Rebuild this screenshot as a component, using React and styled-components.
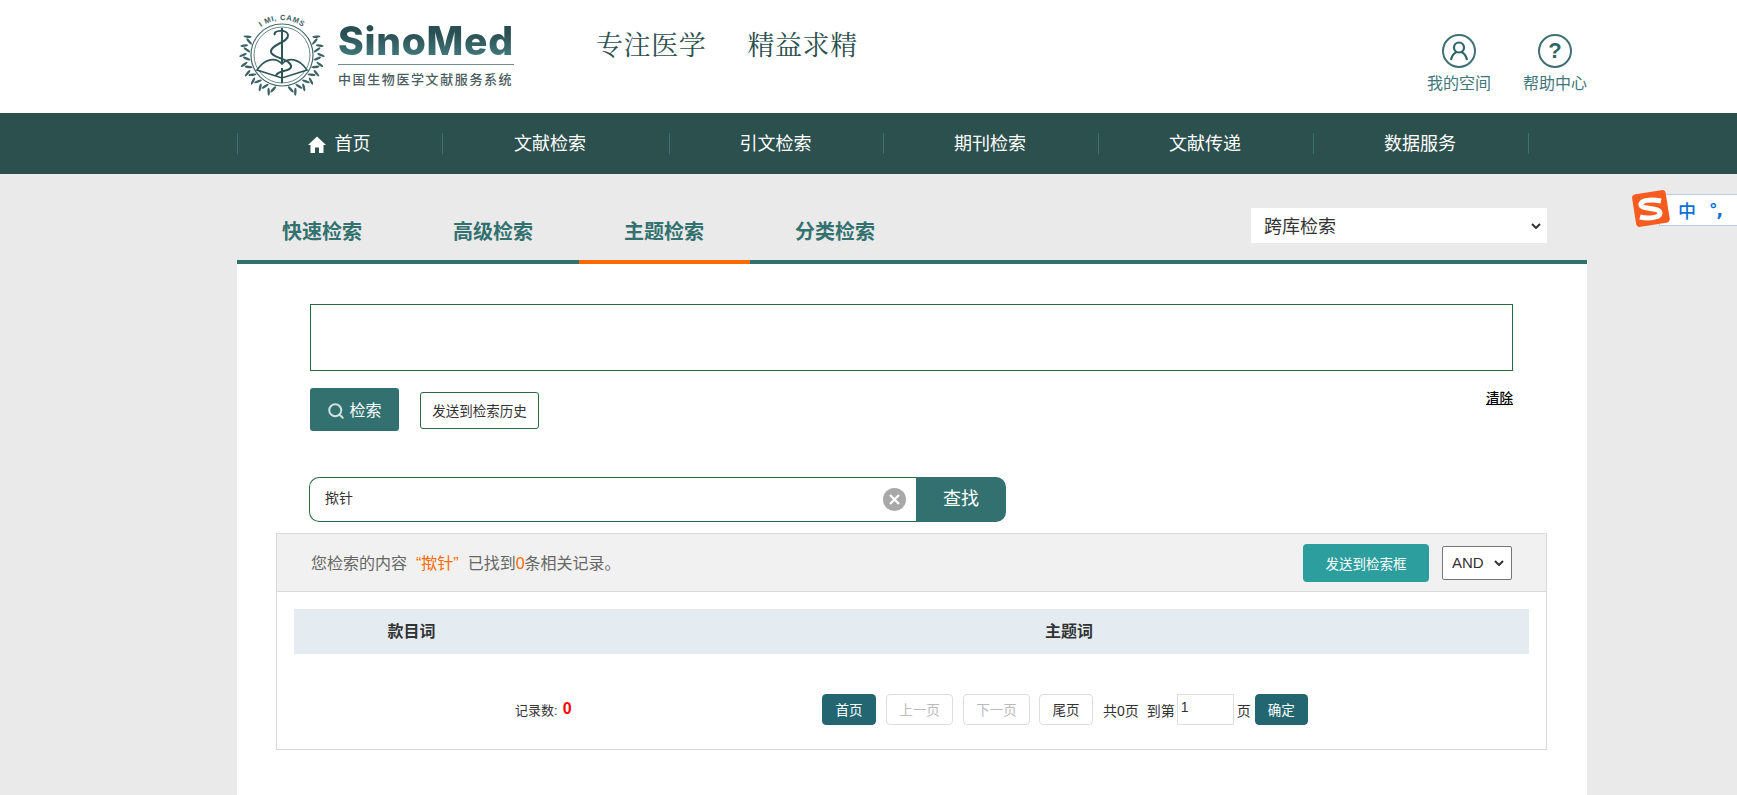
import React from "react";
import styled, { createGlobalStyle } from "styled-components";
import { Search } from "lucide-react";

const CHEVRON = `url("data:image/svg+xml,%3Csvg xmlns='http://www.w3.org/2000/svg' width='10' height='6' viewBox='0 0 10 6'%3E%3Cpath d='M1 1l4 4 4-4' fill='none' stroke='%23333' stroke-width='2'/%3E%3C/svg%3E")`;

const GlobalStyle = createGlobalStyle`
  html, body {
    margin: 0;
    padding: 0;
    height: 100%;
    background: #eaeaea;
    font-family: "Liberation Sans", "Noto Sans CJK SC", sans-serif;
    color: #333;
  }
  #root {
    min-height: 100%;
  }
  * {
    box-sizing: border-box;
  }
`;

const Page = styled.div`
  position: relative;
  display: flex;
  flex-direction: column;
  min-height: 100vh;
  overflow: hidden;
`;

const Header = styled.header`
  display: flex;
  align-items: flex-start;
  height: 113px;
  padding-left: 238px;
  background: #fff;
`;

const LogoMark = styled.svg`
  flex: none;
  width: 88px;
  height: 90px;
  margin-top: 8px;
`;

const Brand = styled.div`
  display: flex;
  flex-direction: column;
  width: 176px;
  margin: 0 0 0 12px;
`;

const BrandName = styled.div`
  height: 38px;
  margin-top: 22px;
  font: 800 39px/38px Inter, "Liberation Sans", sans-serif;
  letter-spacing: 0.7px;
  white-space: nowrap;
  background: linear-gradient(180deg, #2a4f52 30%, #41787c 90%);
  -webkit-background-clip: text;
  background-clip: text;
  color: transparent;
`;

const BrandRule = styled.div`
  height: 1px;
  margin-top: 4px;
  background: #6f8f92;
`;

const BrandSub = styled.div`
  margin-top: 6px;
  font-size: 13px;
  line-height: 18px;
  font-weight: 500;
  letter-spacing: 1.6px;
  white-space: nowrap;
  color: #4b5d5f;
`;

const Slogan = styled.div`
  display: flex;
  gap: 41px;
  margin: 26px 0 0 82px;
  font-family: "Noto Serif CJK SC", "Liberation Serif", serif;
  font-size: 27px;
  line-height: 36px;
  letter-spacing: 0.6px;
  color: #2c5050;
`;

const UserLinks = styled.div`
  display: flex;
  gap: 32px;
  margin: 34px 0 0 auto;
  padding-right: 150px;
`;

const UserLink = styled.a`
  display: flex;
  flex-direction: column;
  align-items: center;
  gap: 4px;
  font-size: 16px;
  line-height: 24px;
  color: #41767a;
`;

const RoundIcon = styled.span`
  display: flex;
  align-items: center;
  justify-content: center;
  width: 34px;
  height: 34px;
  border: 2px solid #3f7074;
  border-radius: 50%;
  font: 700 22px/1 "Liberation Sans", sans-serif;
  color: #2f6468;
`;

const Nav = styled.nav`
  display: flex;
  align-items: center;
  height: 61px;
  padding-left: 237px;
  background: #2c504e;
`;

const NavItem = styled.a`
  display: flex;
  align-items: center;
  justify-content: center;
  gap: 9px;
  flex: none;
  width: ${(p) => p.$w}px;
  height: 21px;
  padding: 2px ${(p) => p.$pr || 2}px 0 0;
  border-left: 1px solid #3c7072;
  border-right: ${(p) => (p.$last ? "1px solid #3c7072" : "none")};
  font-size: 18px;
  line-height: 19px;
  color: #fff;
`;

const Main = styled.main`
  display: flex;
  flex: 1;
  flex-direction: column;
  width: 1350px;
  margin-left: 237px;
`;

const TabBar = styled.div`
  display: flex;
  align-items: flex-end;
  height: 90px;
  border-bottom: 4px solid #33716f;
`;

const Tab = styled.a`
  flex: none;
  width: 171px;
  height: 62px;
  margin-bottom: -4px;
  padding-right: 1px;
  border-bottom: 4px solid ${(p) => (p.$active ? "#ff6a00" : "transparent")};
  font-size: 20px;
  font-weight: 700;
  line-height: 60px;
  text-align: center;
  color: #33716f;
`;

const DbSelect = styled.select`
  width: 296px;
  height: 35px;
  margin: 0 40px 17px auto;
  padding: 3px 0 0 13px;
  border: none;
  border-radius: 0;
  outline: none;
  appearance: none;
  background: #fff ${CHEVRON} no-repeat right 6px center;
  font: 18px "Liberation Sans", "Noto Sans CJK SC", sans-serif;
  color: #333;
`;

const Card = styled.section`
  flex: 1;
  padding-top: 40px;
  background: #fff;
`;

const Form = styled.div`
  margin: 0 74px 0 73px;
`;

const QueryBox = styled.textarea`
  display: block;
  width: 100%;
  height: 67px;
  border: 1px solid #266b3f;
  outline: none;
  resize: none;
`;

const Actions = styled.div`
  display: flex;
  align-items: center;
  gap: 21px;
  height: 43px;
  margin-top: 17px;
`;

const SearchButton = styled.button`
  display: flex;
  align-items: center;
  justify-content: center;
  gap: 4px;
  width: 89px;
  height: 43px;
  padding: 0 0 2px;
  border: none;
  border-radius: 3px;
  background: #337171;
  font: 16px "Liberation Sans", "Noto Sans CJK SC", sans-serif;
  color: #fff;
  svg {
    margin-top: 4px;
    color: #cfe2e0;
  }
`;

const HistoryButton = styled.button`
  width: 119px;
  height: 37px;
  margin-top: 1px;
  padding: 0;
  border: 1px solid #266b3f;
  border-radius: 3px;
  background: #fff;
  font: 13.5px "Liberation Sans", "Noto Sans CJK SC", sans-serif;
  color: #333;
`;

const ClearLink = styled.a`
  align-self: flex-start;
  margin: 2px 0 0 auto;
  font-size: 13.5px;
  font-weight: 500;
  line-height: 18px;
  text-decoration: underline;
  color: #000;
`;

const FindBar = styled.div`
  display: flex;
  width: 697px;
  height: 45px;
  margin: 46px 0 0 -1px;
`;

const FindField = styled.div`
  display: flex;
  flex: 1;
  align-items: center;
  padding: 0 10px 0 15px;
  border: 1px solid #266b3f;
  border-right: none;
  border-radius: 10px 0 0 10px;
`;

const FindInput = styled.input`
  flex: 1;
  min-width: 0;
  border: none;
  outline: none;
  padding: 0 0 6px;
  font: 14px "Liberation Sans", "Noto Sans CJK SC", sans-serif;
  color: #333;
`;

const FindButton = styled.button`
  flex: none;
  width: 90px;
  padding: 0 0 6px;
  border: none;
  border-radius: 0 10px 10px 0;
  background: #337171;
  font: 18px "Liberation Sans", "Noto Sans CJK SC", sans-serif;
  color: #fff;
`;

const ResultPanel = styled.div`
  height: 217px;
  margin: 11px 40px 0 39px;
  border: 1px solid #d9d9d9;
`;

const ResultHead = styled.div`
  display: flex;
  align-items: center;
  height: 58px;
  padding: 0 34px;
  border-bottom: 1px solid #d9d9d9;
  background: #f1f1f1;
`;

const ResultText = styled.div`
  padding-top: 2px;
  font-size: 16px;
  line-height: 24px;
  color: #666;
`;

const Hit = styled.span`
  color: #ff6a00;
`;

const QuotedHit = styled(Hit)`
  margin: 0 9px 0 9px;
`;

const SendButton = styled.button`
  width: 126px;
  height: 38px;
  margin-left: auto;
  padding: 0;
  border: none;
  border-radius: 4px;
  background: #2c9e9e;
  font: 13.5px "Liberation Sans", "Noto Sans CJK SC", sans-serif;
  color: #fff;
`;

const OperatorSelect = styled.select`
  width: 70px;
  height: 34px;
  margin-left: 13px;
  padding-left: 9px;
  border: 1px solid #767676;
  border-radius: 2px;
  appearance: none;
  background: #fff ${CHEVRON} no-repeat right 7px center;
  font: 15px "Liberation Sans", sans-serif;
  color: #333;
`;

const TableHead = styled.div`
  display: grid;
  grid-template-columns: 235px 1fr;
  height: 45px;
  margin: 17px 17px 0 17px;
  background: #e4ecf2;
  font-size: 16px;
  font-weight: 700;
  line-height: 45px;
  text-align: center;
  color: #333;
`;

const SubjectHead = styled.div`
  padding-left: 80px;
`;

const Pager = styled.div`
  display: flex;
  align-items: center;
  height: 31px;
  margin-top: 40px;
  padding-left: 238px;
  font-size: 14px;
  color: #333;
`;

const RecordCount = styled.div`
  display: flex;
  align-items: center;
  gap: 5px;
  flex: none;
  width: 307px;
  font-size: 13px;
`;

const CountNumber = styled.b`
  margin-top: -2px;
  font-size: 16px;
  line-height: 1;
  color: #f00;
`;

const PageButton = styled.button`
  flex: none;
  width: ${(p) => p.$w}px;
  height: 31px;
  margin-right: ${(p) => p.$mr || 0}px;
  padding: 0 0 2px;
  border: 1px solid ${(p) => (p.$primary ? "#236672" : "#ddd")};
  border-radius: 4px;
  background: ${(p) => (p.$primary ? "#236672" : "#fff")};
  font: 13.5px "Liberation Sans", "Noto Sans CJK SC", sans-serif;
  color: ${(p) => (p.$primary ? "#fff" : p.disabled ? "#bbb" : "#333")};
`;

const PagerText = styled.span`
  flex: none;
  margin-right: ${(p) => p.$mr || 0}px;
  white-space: nowrap;
`;

const PageInput = styled.input`
  flex: none;
  width: 57px;
  height: 31px;
  margin-right: 3px;
  padding: 0 0 5px 3px;
  border: 1px solid #ddd;
  outline: none;
  font: 14px "Liberation Sans", sans-serif;
  color: #333;
`;

const ImeBadge = styled.div`
  position: absolute;
  top: 190px;
  right: 0;
  display: flex;
  align-items: center;
  width: 106px;
  height: 40px;
`;

const ImeLogoMark = styled.svg`
  position: relative;
  z-index: 1;
  flex: none;
  margin-top: -3px;
`;

const ImeStrip = styled.div`
  display: flex;
  align-items: center;
  gap: 13px;
  width: 78px;
  height: 32px;
  margin-left: -12px;
  padding-left: 18px;
  border: 1px solid #b8cde8;
  border-right: none;
  background: #fff;
  font-size: 18px;
  font-weight: 500;
  color: #0a6fd8;
`;

const ImePunct = styled.span`
  font: 700 17px/1 "DejaVu Sans", sans-serif;
  letter-spacing: -1px;
`;

const NAV_ITEMS = [
    { label: "文献检索", w: 227, pr: 12 },
    { label: "引文检索", w: 214 },
    { label: "期刊检索", w: 215 },
    { label: "文献传递", w: 215 },
];

const TABS = ["快速检索", "高级检索", "主题检索", "分类检索"];

// laurel leaves running down one side of the emblem, angle from the top
const leafAngles = [62, 76, 90, 104, 118, 132, 146, 160];

function leafPair(a, side) {
    const rad = (a * Math.PI) / 180;
    const out = {
        x: 44 + side * 39 * Math.sin(rad),
        y: 47 - 39 * Math.cos(rad),
    };
    const inn = {
        x: 44 + side * 35.5 * Math.sin(rad + 0.1),
        y: 47 - 35.5 * Math.cos(rad + 0.1),
    };
    return (
        <g key={`${a}-${side}`} fill="#3c6265">
            <ellipse cx={out.x} cy={out.y} rx="1.2" ry="4" transform={`rotate(${side * (a + 22)} ${out.x} ${out.y})`} />
            <ellipse cx={inn.x} cy={inn.y} rx="1.2" ry="4" transform={`rotate(${side * (a - 22)} ${inn.x} ${inn.y})`} />
        </g>
    );
}

function Emblem() {
    return (
        <LogoMark viewBox="0 0 88 90">
            <defs>
                <path id="emblem-arc" d="M15.3 27 A 35 35 0 0 1 72.7 27" />
            </defs>
            <g fill="none" stroke="#44696c">
                <circle cx="44" cy="47" r="31" strokeWidth="1.2" />
                <circle cx="44" cy="47" r="28" strokeWidth="0.8" />
            </g>
            {leafAngles.map((a) => leafPair(a, -1))}
            {leafAngles.map((a) => leafPair(a, 1))}
            <text fontFamily="Liberation Sans, sans-serif" fontSize="7.5" fontWeight="700" fill="#3c6265" letterSpacing="0.6" textAnchor="middle">
                <textPath href="#emblem-arc" startOffset="50%">I MI, CAMS</textPath>
            </text>
            <path d="M44 20 V75" stroke="#2f5558" strokeWidth="2" fill="none" />
            <path d="M19 62 C27 50 38 49 44 56 C50 49 61 50 69 62 L44 70 Z" fill="#fff" stroke="#2f5558" strokeWidth="1.6" />
            <path d="M44 60 V75" stroke="#2f5558" strokeWidth="2" fill="none" />
            <path
                d="M37 27 C34 22 49 21 50 27 C51 34 34 36 33 43 C32 50 52 50 53 58 C54 64 38 62 38 68"
                stroke="#2f5558"
                strokeWidth="2"
                fill="none"
            />
        </LogoMark>
    );
}

function ImeLogo() {
    return (
        <ImeLogoMark width="40" height="40" viewBox="0 0 40 40">
            <rect x="3" y="3" width="34" height="33" rx="4" fill="#f85b1f" transform="rotate(-9 20 20)" />
            <path d="M30 12 C20 10 9 11 10 16 C11 21 29 18 29 24 C29 29 17 30 9 28" fill="none" stroke="#fff" strokeWidth="5" />
        </ImeLogoMark>
    );
}

function App() {
    return (
        <Page>
            <GlobalStyle />
            <Header>
                <Emblem />
                <Brand>
                    <BrandName>SinoMed</BrandName>
                    <BrandRule />
                    <BrandSub>中国生物医学文献服务系统</BrandSub>
                </Brand>
                <Slogan>
                    <span>专注医学</span>
                    <span>精益求精</span>
                </Slogan>
                <UserLinks>
                    <UserLink>
                        <RoundIcon>
                            <svg width="22" height="22" viewBox="0 0 22 22" fill="none" stroke="#2f6468" strokeWidth="2.2">
                                <circle cx="11" cy="7.5" r="5" />
                                <path d="M3 20 C4 14 7 13 8.5 12 M19 20 C18 14 15 13 13.5 12" />
                            </svg>
                        </RoundIcon>
                        我的空间
                    </UserLink>
                    <UserLink>
                        <RoundIcon>?</RoundIcon>
                        帮助中心
                    </UserLink>
                </UserLinks>
            </Header>
            <Nav>
                <NavItem $w={205}>
                    <svg width="18" height="18" viewBox="0 0 18 18" fill="#fff">
                        <path d="M9 0.5 L0 9 H2.5 V17 H7 V11.5 H11 V17 H15.5 V9 H18 Z" />
                    </svg>
                    首页
                </NavItem>
                {NAV_ITEMS.map((item) => (
                    <NavItem key={item.label} $w={item.w} $pr={item.pr}>
                        {item.label}
                    </NavItem>
                ))}
                <NavItem $w={216} $last>
                    数据服务
                </NavItem>
            </Nav>
            <Main>
                <TabBar>
                    {TABS.map((tab) => (
                        <Tab key={tab} $active={tab === "主题检索"}>
                            {tab}
                        </Tab>
                    ))}
                    <DbSelect defaultValue="跨库检索">
                        <option>跨库检索</option>
                    </DbSelect>
                </TabBar>
                <Card>
                    <Form>
                        <QueryBox />
                        <Actions>
                            <SearchButton>
                                <Search size={18} strokeWidth={2.6} />
                                检索
                            </SearchButton>
                            <HistoryButton>发送到检索历史</HistoryButton>
                            <ClearLink>清除</ClearLink>
                        </Actions>
                        <FindBar>
                            <FindField>
                                <FindInput defaultValue="揿针" />
                                <svg width="23" height="23" viewBox="0 0 23 23">
                                    <circle cx="11.5" cy="11.5" r="11.5" fill="#a8a8a8" />
                                    <path d="M7 7 L16 16 M16 7 L7 16" stroke="#fff" strokeWidth="2.2" />
                                </svg>
                            </FindField>
                            <FindButton>查找</FindButton>
                        </FindBar>
                    </Form>
                    <ResultPanel>
                        <ResultHead>
                            <ResultText>
                                您检索的内容<QuotedHit>“揿针”</QuotedHit>已找到<Hit>0</Hit>条相关记录。
                            </ResultText>
                            <SendButton>发送到检索框</SendButton>
                            <OperatorSelect defaultValue="AND">
                                <option>AND</option>
                                <option>OR</option>
                            </OperatorSelect>
                        </ResultHead>
                        <TableHead>
                            <div>款目词</div>
                            <SubjectHead>主题词</SubjectHead>
                        </TableHead>
                        <Pager>
                            <RecordCount>
                                <span>记录数:</span>
                                <CountNumber>0</CountNumber>
                            </RecordCount>
                            <PageButton $w={54} $mr={10} $primary>首页</PageButton>
                            <PageButton $w={67} $mr={10} disabled>上一页</PageButton>
                            <PageButton $w={67} $mr={9} disabled>下一页</PageButton>
                            <PageButton $w={54} $mr={10}>尾页</PageButton>
                            <PagerText $mr={8}>共0页</PagerText>
                            <PagerText $mr={2}>到第</PagerText>
                            <PageInput defaultValue="1" />
                            <PagerText $mr={4}>页</PagerText>
                            <PageButton $w={53} $primary>确定</PageButton>
                        </Pager>
                    </ResultPanel>
                </Card>
            </Main>
            <ImeBadge>
                <ImeLogo />
                <ImeStrip>
                    中<ImePunct>°,</ImePunct>
                </ImeStrip>
            </ImeBadge>
        </Page>
    );
}

export default App;
